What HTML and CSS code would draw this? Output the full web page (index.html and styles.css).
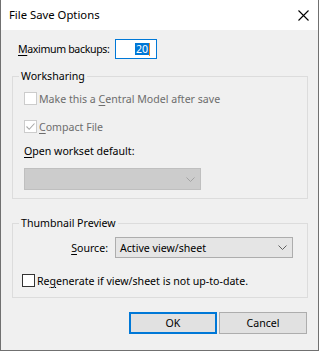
FILE: index.html
```html
<!DOCTYPE html>
<html lang="en">
<head>
  <meta charset="UTF-8">
  <title>File Save Options</title>
  <link rel="stylesheet" href="styles.css">
</head>
<body>

  <div class="window">
    <div class="titlebar">
      <span class="title">File Save Options</span>
      <svg class="close" width="11" height="11" viewBox="0 0 11 11">
        <path d="M0.5 0.5 L10.5 10.5 M10.5 0.5 L0.5 10.5" stroke="#000" stroke-width="1.1" fill="none"/>
      </svg>
    </div>

    <div class="content">
      <div class="backups">
        <span class="backups-label"><u>M</u>aximum backups:</span>
        <span class="num-input"><span class="sel">20</span><span class="caret"></span></span>
      </div>

      <fieldset class="group worksharing">
        <legend>Worksharing</legend>
        <div class="check disabled">
          <span class="box"></span>
          <span>Make this a <u>C</u>entral Model after save</span>
        </div>
        <div class="check disabled">
          <span class="box">
            <svg width="11" height="11" viewBox="0 0 11 11">
              <path d="M1.5 5.5 L4.2 8.3 L9.5 2.5" stroke="#a8a8a8" stroke-width="1.1" fill="none"/>
            </svg>
          </span>
          <span><u>C</u>ompact File</span>
        </div>
        <div class="field-label"><u>O</u>pen workset default:</div>
        <div class="combo combo-disabled">
          <span class="combo-text"></span>
          <svg class="chevron" width="9" height="5" viewBox="0 0 9 5">
            <path d="M0.5 0.5 L4.5 4.5 L8.5 0.5" stroke="#a3a3a3" stroke-width="1" fill="none"/>
          </svg>
        </div>
      </fieldset>

      <fieldset class="group thumbnail">
        <legend>Thumbnail Preview</legend>
        <div class="source-row">
          <span class="source-label"><u>S</u>ource:</span>
          <div class="combo combo-source">
            <span class="combo-text">Active view/sheet</span>
            <svg class="chevron" width="9" height="5" viewBox="0 0 9 5">
              <path d="M0.5 0.5 L4.5 4.5 L8.5 0.5" stroke="#606060" stroke-width="1" fill="none"/>
            </svg>
          </div>
        </div>
        <div class="check regen">
          <span class="box"></span>
          <span>Re<u>g</u>enerate if view/sheet is not up-to-date.</span>
        </div>
      </fieldset>

      <div class="buttons">
        <button class="btn btn-default">OK</button>
        <button class="btn">Cancel</button>
      </div>
    </div>
  </div>

</body>
</html>
```

FILE: styles.css
```css
body {
  margin: 0;
  font-family: "Noto Sans", sans-serif;
  font-size: 10.6px;
  color: #000;
}
u {
  text-decoration-thickness: 1px;
  text-underline-offset: 2px;
}
.window {
  width: 319px;
  height: 351px;
  box-sizing: border-box;
  border: 1px solid #707070;
  border-top: none;
  background-color: #f0f0f0;
  display: flex;
  flex-direction: column;
}
.titlebar {
  height: 30px;
  background-color: #fff;
  display: flex;
  align-items: center;
  justify-content: space-between;
  padding: 0 9px 0 8px;
}
.title {
  font-size: 11.3px;
  padding-bottom: 1px;
}
.content {
  flex: 1;
  display: flex;
  flex-direction: column;
}

/* Maximum backups */
.backups {
  display: flex;
  align-items: center;
  margin-top: 9px;
  padding-left: 17px;
  height: 20px;
}
.backups-label {
  flex: none;
  width: 97px;
  white-space: nowrap;
  letter-spacing: -0.35px;
}
.num-input {
  flex: none;
  width: 42px;
  height: 20px;
  box-sizing: border-box;
  border: 1px solid #0078d7;
  background-color: #fff;
  display: flex;
  align-items: center;
  justify-content: flex-end;
  padding-right: 6px;
}
.sel {
  background-color: #0078d7;
  color: #fff;
  line-height: 12px;
  padding: 0 1px;
}
.caret {
  width: 1px;
  height: 13px;
  background-color: #f08a24;
}

/* Group boxes */
.group {
  margin: 0 10px 0 11px;
  border: 1px solid #dcdcdc;
  padding: 0 11px;
  display: flex;
  flex-direction: column;
}
.group legend {
  padding: 0 2px;
  margin-left: -5px;
  line-height: 15px;
}
.worksharing {
  margin-top: 10px;
  padding-top: 7px;
  padding-bottom: 8px;
}
.thumbnail {
  margin-top: 17px;
  padding-top: 6px;
  padding-bottom: 9px;
}

.check {
  display: flex;
  align-items: center;
  height: 15px;
  gap: 2px;
  white-space: nowrap;
}
.check + .check {
  margin-top: 13px;
}
.box {
  width: 13px;
  height: 13px;
  box-sizing: border-box;
  border: 1px solid #333;
  background-color: #fff;
  display: flex;
  align-items: center;
  justify-content: center;
}
.disabled {
  color: #6d6d6d;
}
.disabled .box {
  border-color: #cccccc;
}
.field-label {
  margin-top: 10px;
  line-height: 15px;
}

/* Combo boxes */
.combo {
  box-sizing: border-box;
  display: flex;
  align-items: center;
  justify-content: space-between;
  padding: 0 5px 0 4px;
}
.combo-disabled {
  margin-top: 9px;
  width: 177px;
  height: 22px;
  background-color: #cccccc;
  border: 1px solid #bfbfbf;
}
.combo-source {
  width: 178px;
  height: 21px;
  background-color: #e5e5e5;
  border: 1px solid #adadad;
}
.source-row {
  display: flex;
  align-items: center;
}
.source-label {
  width: 91px;
  box-sizing: border-box;
  text-align: right;
  padding-right: 7px;
}
.regen {
  margin-top: 15px;
  margin-left: -2px;
}

/* Buttons */
.buttons {
  display: flex;
  justify-content: flex-end;
  gap: 2px;
  margin-top: 14px;
  padding-right: 11px;
}
.btn {
  width: 88px;
  height: 22px;
  box-sizing: border-box;
  font-family: "Noto Sans", sans-serif;
  font-size: 10.6px;
  background-color: #e1e1e1;
  border: 1px solid #adadad;
  padding: 0;
  color: #000;
}
.btn-default {
  border: 2px solid #0078d7;
}
```
